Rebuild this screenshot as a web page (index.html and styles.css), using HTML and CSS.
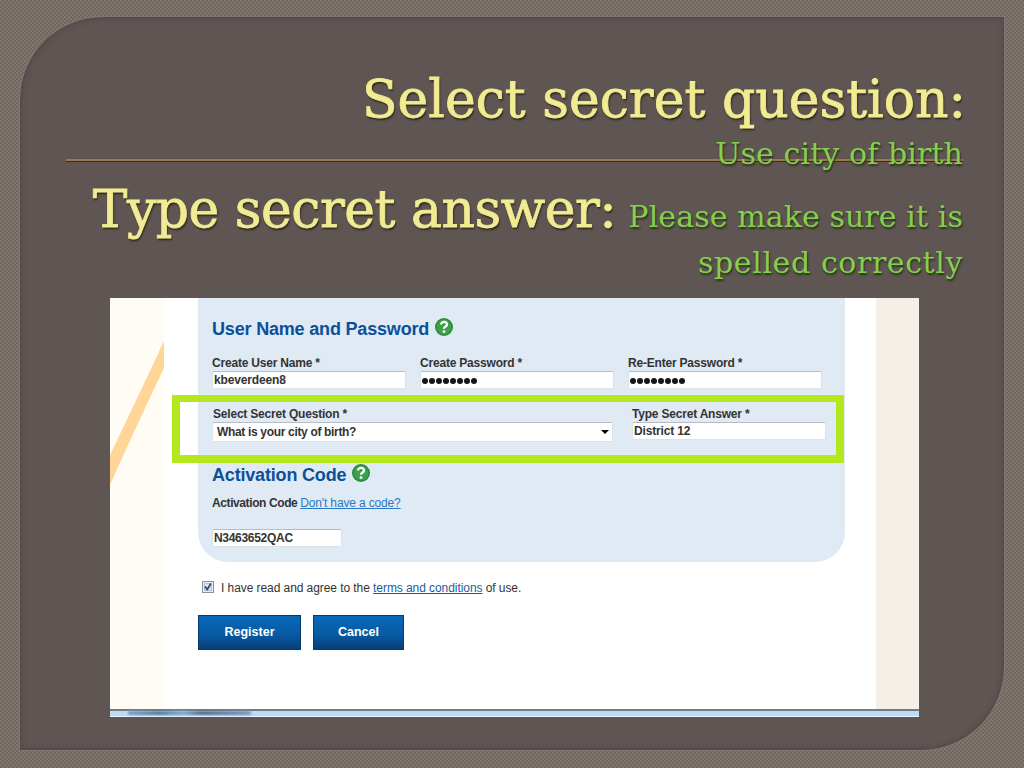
FILE: index.html
```
<!DOCTYPE html>
<html lang="en">
<head>
    <meta charset="utf-8">
    <title>Select secret question</title>
    <link rel="stylesheet" href="styles.css">
</head>
<body>
    <div class="slide">
    <div class="rule"></div>
    <h1 class="title">
        <span class="line big one">Select secret question:</span>
        <span class="line small two">Use city of birth</span>
        <span class="line three"><span class="big answer">Type secret answer:</span><span class="small please">Please make sure it is</span></span>
        <span class="line small four">spelled correctly</span>
    </h1>

    <div class="shot">
        <svg class="left" width="54" height="411" viewBox="0 0 54 411">
            <path d="M54 43 V70 Q24 133 0 187 V157 Q25 105 54 43Z" fill="#ffd697"/>
        </svg>
        <div class="page">
            <div class="box">
                <h2>User Name and Password
                    <svg width="18" height="18" viewBox="0 0 18 18"><circle cx="9" cy="9" r="9" fill="#2c8a3c"/><circle cx="9" cy="9" r="7.4" fill="#3fa04b"/><path d="M6 6.6C6 3 12.3 3.1 12 6.6C11.8 8.7 9 8.4 9 10.8" fill="none" stroke="#fff" stroke-width="2.2"/><circle cx="9" cy="13.6" r="1.4" fill="#fff"/></svg>
                </h2>
                <div class="row first">
                    <div class="field"><label>Create User Name *</label><div class="input">kbeverdeen8</div></div>
                    <div class="field"><label>Create Password *</label><div class="input dots"><i></i><i></i><i></i><i></i><i></i><i></i><i></i><i></i></div></div>
                    <div class="field"><label>Re-Enter Password *</label><div class="input dots"><i></i><i></i><i></i><i></i><i></i><i></i><i></i><i></i></div></div>
                </div>
                <div class="row second">
                    <div class="field question"><label>Select Secret Question *</label><div class="input select">What is your city of birth?<b class="arrow"></b></div></div>
                    <div class="field"><label>Type Secret Answer *</label><div class="input">District 12</div></div>
                </div>
                <h2 class="activation">Activation Code
                    <svg width="18" height="18" viewBox="0 0 18 18"><circle cx="9" cy="9" r="9" fill="#2c8a3c"/><circle cx="9" cy="9" r="7.4" fill="#3fa04b"/><path d="M6 6.6C6 3 12.3 3.1 12 6.6C11.8 8.7 9 8.4 9 10.8" fill="none" stroke="#fff" stroke-width="2.2"/><circle cx="9" cy="13.6" r="1.4" fill="#fff"/></svg>
                </h2>
                <p class="code">Activation Code <a>Don't have a code?</a></p>
                <div class="input short">N3463652QAC</div>
            </div>
            <div class="agree">
                <svg width="12" height="12" viewBox="0 0 12 12"><rect x=".5" y=".5" width="11" height="11" fill="#e8eef4" stroke="#8793a2"/><rect x="2.5" y="2.5" width="7" height="7" fill="#dbe3ee" stroke="#b6c3d3"/><path d="M3 5.5L5.2 8.5L9 2.5" fill="none" stroke="#34477e" stroke-width="1.8"/></svg>
                <span>I have read and agree to the <a>terms and conditions</a> of use.</span>
            </div>
            <div class="buttons">
                <div class="button register">Register</div>
                <div class="button cancel">Cancel</div>
            </div>
        </div>
        <div class="right"></div>
        <div class="taskbar"><div class="smudge"></div></div>
        <div class="highlight"></div>
    </div>
    </div>
</body>
</html>
```
FILE: styles.css
```
* {
    box-sizing: border-box;
}
body {
    margin: 0;
    width: 1024px;
    height: 768px;
    overflow: hidden;
    padding: 16px 19px 17px 19px;
    background: repeating-conic-gradient(#71665f 0 25%, #82776f 0 50%) 0 0 / 4px 4px;
}
.slide {
    position: relative;
    height: 735px;
    padding: 51px 41px 0 70px;
    background: #5f5552;
    border: 1px solid #81777a;
    border-radius: 84px 0 84px 0;
    box-shadow: inset 0 0 5px 1px #40363480;
}
.rule {
    position: absolute;
    left: 46px;
    top: 142px;
    width: 897px;
    height: 3px;
    background: #967b57;
    border-bottom: 1px solid #3f2817;
    box-shadow: 0 0 2px #705033;
}
.title {
    position: relative;
    height: 230px;
    margin: 0;
    font-family: "DejaVu Serif", serif;
    font-weight: normal;
    text-align: right;
    white-space: nowrap;
}
.line {
    display: block;
}
.big {
    color: #f1ec92;
    font-size: 52px;
    text-shadow: 1px 2px 2px #292417;
    -webkit-text-stroke: 0.8px #f1ec92;
}
.small {
    color: #87ce50;
    font-size: 30px;
    text-shadow: 1px 2px 2px #263719;
}
.one {
    height: 62px;
    margin-right: -3px;
    line-height: 62px;
}
.two {
    height: 46px;
    line-height: 47px;
    letter-spacing: 0.1px;
}
.three {
    display: flex;
    justify-content: flex-end;
    align-items: baseline;
    gap: 12px;
    height: 66px;
    line-height: 66px;
}
.answer {
    letter-spacing: -0.5px;
}
.please {
    letter-spacing: 0.1px;
}
.four {
    height: 40px;
    line-height: 42px;
    letter-spacing: 0.6px;
}
.shot {
    position: relative;
    display: grid;
    grid-template-columns: 54px 712px 43px;
    grid-template-rows: 411px 8px;
    width: 809px;
    margin-left: 20px;
    background: #fff;
    color: #333;
    font: 12px/14px "Liberation Sans", Arial, sans-serif;
}
.left {
    background: #fffcf6;
}
.right {
    background: #f4f0e8;
}
.page {
    padding-left: 34px;
}
.box {
    width: 647px;
    height: 264px;
    padding: 18px 14px 0;
    background: #e0eaf5;
    border-radius: 0 0 30px 30px;
    font-weight: bold;
    letter-spacing: -0.15px;
}
h2 {
    display: flex;
    gap: 6px;
    height: 27px;
    margin: 0;
    color: #0b509a;
    font-size: 18px;
    line-height: 27px;
    letter-spacing: -0.18px;
}
h2 svg {
    margin-top: 2px;
}
.row {
    display: flex;
}
.first {
    gap: 14px;
    margin-top: 13px;
}
.second {
    gap: 19px;
    margin-top: 18px;
}
.field {
    width: 194px;
}
.question {
    width: 401px;
}
.question label {
    padding-left: 1px;
}
.field label {
    display: block;
    height: 15px;
    line-height: 14px;
    letter-spacing: -0.2px;
}
.input {
    height: 18px;
    padding-left: 1px;
    background: #fff;
    border: 1px solid #dce2ea;
    border-top-color: #b8bdc5;
    border-radius: 2px;
    line-height: 16px;
    color: #333;
}
.dots {
    display: flex;
    align-items: center;
    gap: 1px;
    padding-top: 2px;
}
.dots i {
    width: 6px;
    height: 6px;
    border-radius: 50%;
    background: #161616;
}
.select {
    display: flex;
    justify-content: space-between;
    align-items: center;
    height: 20px;
    padding: 0 3px 0 4px;
    letter-spacing: -0.33px;
}
.arrow {
    border: 4px solid transparent;
    border-top-color: #000;
    border-bottom: 0;
}
.activation {
    margin-top: 20px;
}
.code {
    margin: 7px 0 19px;
    letter-spacing: -0.4px;
}
.code a {
    color: #2878c6;
    font-weight: normal;
    letter-spacing: -0.15px;
    text-decoration: underline;
}
.short {
    width: 130px;
    letter-spacing: -0.3px;
}
.agree {
    display: flex;
    gap: 7px;
    margin: 19px 0 0 4px;
    letter-spacing: -0.07px;
}
.agree a {
    color: #1c5ba4;
    text-decoration: underline;
}
.buttons {
    display: flex;
    gap: 12px;
    margin-top: 20px;
}
.button {
    height: 35px;
    border: 1px solid #063b70;
    background: linear-gradient(#0867b8, #075ba5 55%, #073f75);
    color: #fff;
    font-size: 12.5px;
    font-weight: bold;
    line-height: 32px;
    text-align: center;
}
.register {
    width: 103px;
}
.cancel {
    width: 91px;
}
.taskbar {
    grid-column: 1 / 4;
    height: 8px;
    background: #badcfb;
    border-top: 2px solid #777b80;
    border-bottom: 1px solid #edf5ff;
}
.smudge {
    width: 123px;
    height: 4px;
    margin-left: 18px;
    background: linear-gradient(90deg, #78a4ca, #557c9d 25%, #80a9ce 45%, #506f8d 60%, #769bbd);
    filter: blur(1px);
}
.highlight {
    position: absolute;
    left: 62px;
    top: 97px;
    width: 672px;
    height: 68px;
    border: 8px solid #b4e71d;
    border-top-width: 7px;
}
```
